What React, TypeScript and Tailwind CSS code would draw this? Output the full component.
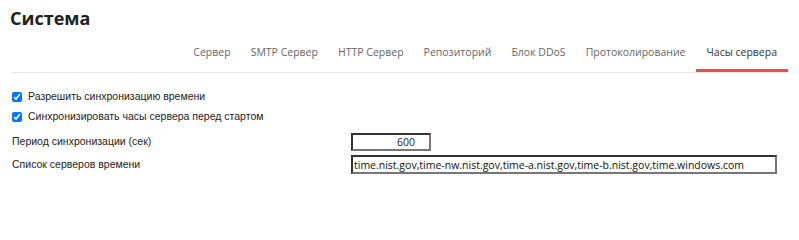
import { useState } from "react";

const tabs = [
  "Сервер",
  "SMTP Сервер",
  "HTTP Сервер",
  "Репозиторий",
  "Блок DDoS",
  "Протоколирование",
  "Часы сервера",
];

export default function App() {
  const [active, setActive] = useState("Часы сервера");
  const [allowSync, setAllowSync] = useState(true);
  const [syncOnStart, setSyncOnStart] = useState(true);

  return (
    <div className="w-[799px] h-[231px] bg-white overflow-hidden">
      <h1
        className="pt-[4px] pl-[10px] text-[18px] leading-[28px] font-bold text-[#222]"
        style={{ fontFamily: "'Open Sans', sans-serif" }}
      >
        Система
      </h1>

      <nav
        className="ml-[12px] mr-[11px] flex justify-end border-b border-[#e8e8e8]"
        style={{ fontFamily: "'Open Sans', sans-serif" }}
      >
        {tabs.map((t) => (
          <button
            key={t}
            onClick={() => setActive(t)}
            className={
              t === active
                ? "px-[11px] pt-[12px] pb-[9px] text-[10.5px] leading-[16px] text-[#333] border-b-[3px] border-[#ef4a55]"
                : "px-[10px] pt-[12px] pb-[9px] text-[10.5px] leading-[16px] text-[#666] border-b-[3px] border-transparent"
            }
          >
            {t}
          </button>
        ))}
      </nav>

      <div
        className="px-[12px] pt-[14px] text-[10.5px] text-[#222]"
        style={{ fontFamily: "'Liberation Sans', Arial, sans-serif" }}
      >
        <label className="flex items-center h-[20px]">
          <input
            type="checkbox"
            checked={allowSync}
            onChange={(e) => setAllowSync(e.target.checked)}
            className="m-0 w-[10px] h-[10px] accent-[#0075ff]"
          />
          <span className="ml-[6px]">Разрешить синхронизацию времени</span>
        </label>
        <label className="flex items-center h-[20px]">
          <input
            type="checkbox"
            checked={syncOnStart}
            onChange={(e) => setSyncOnStart(e.target.checked)}
            className="m-0 w-[10px] h-[10px] accent-[#0075ff]"
          />
          <span className="ml-[6px]">Синхронизировать часы сервера перед стартом</span>
        </label>

        <div className="grid grid-cols-[339px_1fr] gap-y-[4px] mt-[6px]">
          <div className="flex items-center h-[18px]">Период синхронизации (сек)</div>
          <div>
            <input
              type="text"
              defaultValue="600"
              className="w-[80px] h-[18px] pl-[44px] text-[10.5px] leading-[14px] text-[#222] border-2 border-t-[#333] border-l-[#333] border-r-[#777] border-b-[#777] outline-none"
              style={{ fontFamily: "'Open Sans', sans-serif" }}
            />
          </div>
          <div className="flex items-center h-[19px]">Список серверов времени</div>
          <div>
            <input
              type="text"
              defaultValue="time.nist.gov,time-nw.nist.gov,time-a.nist.gov,time-b.nist.gov,time.windows.com"
              className="w-[426px] h-[19px] pl-[1px] text-[10.5px] leading-[14px] text-[#111] border-2 border-t-[#333] border-l-[#333] border-r-[#777] border-b-[#777] outline-none"
              style={{ fontFamily: "'Open Sans', sans-serif" }}
            />
          </div>
        </div>
      </div>
    </div>
  );
}
